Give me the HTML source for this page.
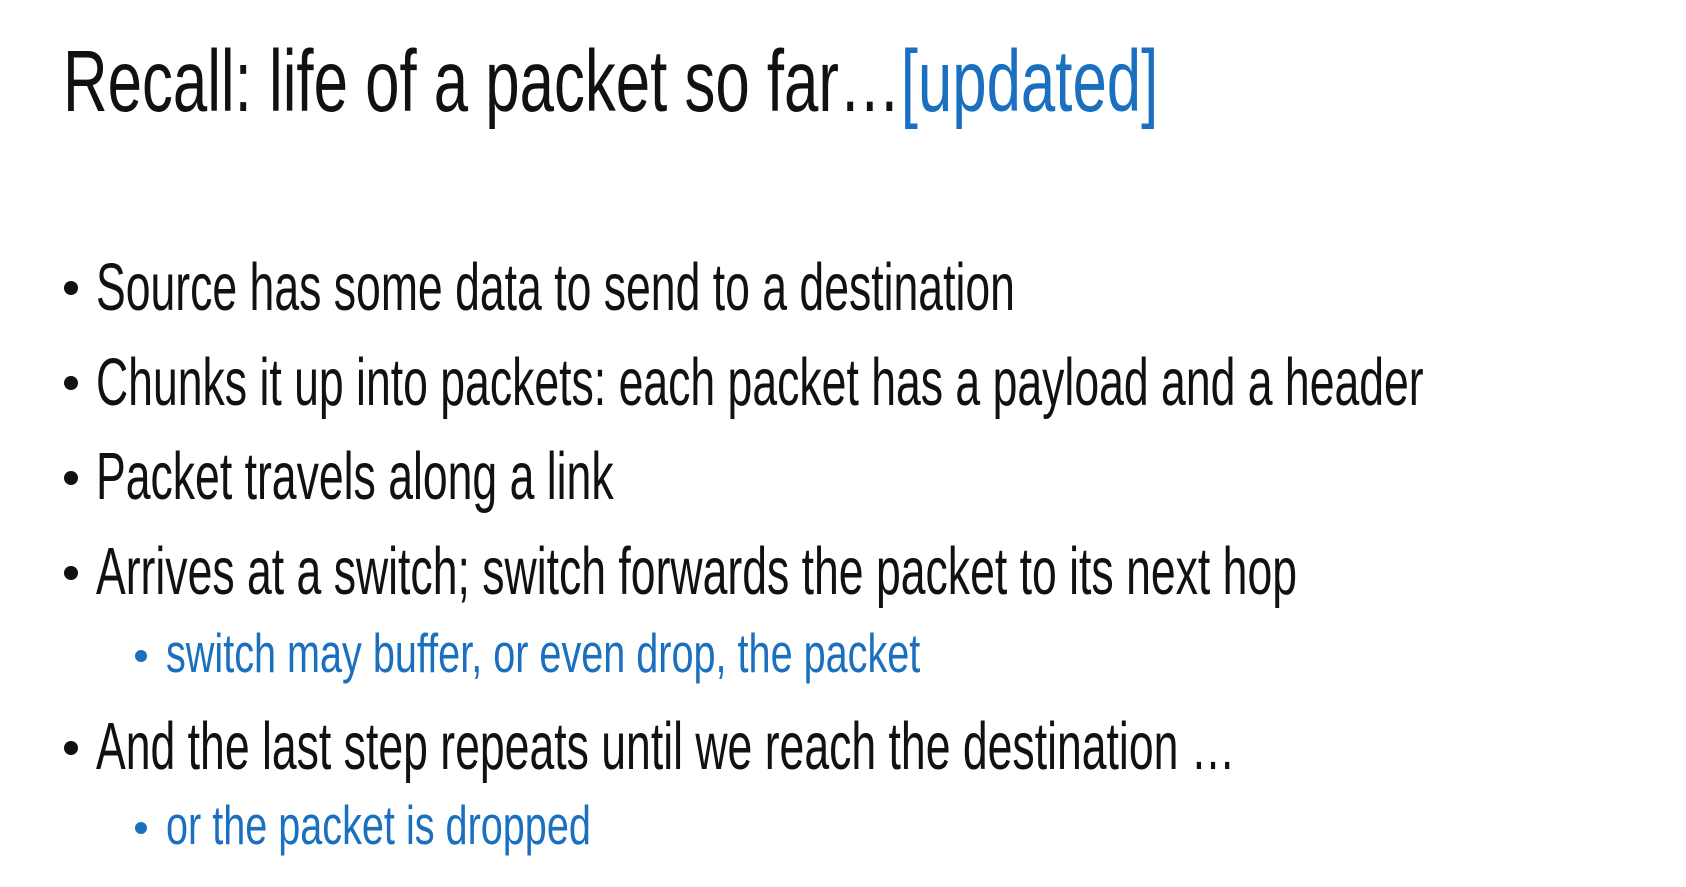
<!DOCTYPE html>
<html><head><meta charset="utf-8"><style>
body{margin:0;width:1686px;height:887px;background:#fff;overflow:hidden;position:relative;font-family:"Liberation Sans",sans-serif;}
.l{position:absolute;white-space:nowrap;transform-origin:0 0;line-height:1;}
.t{font-size:87px;left:63px;top:38px;transform:scaleX(0.71);color:#111}
.b{font-size:67px;left:96px;transform:scaleX(0.665);color:#111}
.s{font-size:55px;left:166px;transform:scaleX(0.72);color:#1a6fbf}
.d{position:absolute;width:14px;height:14px;border-radius:50%;background:#111;left:64px}
.sd{position:absolute;width:12px;height:12px;border-radius:50%;background:#1a6fbf;left:135px}
</style></head><body>
<div class="l t">Recall: life of a packet so far…<span style="color:#1a6fbf">[updated]</span></div>
<div class="d" style="top:281px"></div>
<div class="l b" style="top:254px">Source has some data to send to a destination</div>
<div class="d" style="top:376px"></div>
<div class="l b" style="top:349px">Chunks it up into packets: each packet has a payload and a header</div>
<div class="d" style="top:471px"></div>
<div class="l b" style="top:443px">Packet travels along a link</div>
<div class="d" style="top:566px"></div>
<div class="l b" style="top:538px">Arrives at a switch; switch forwards the packet to its next hop</div>
<div class="sd" style="top:650px"></div>
<div class="l s" style="top:626px">switch may buffer, or even drop, the packet</div>
<div class="d" style="top:741px"></div>
<div class="l b" style="top:713px">And the last step repeats until we reach the destination …</div>
<div class="sd" style="top:822px"></div>
<div class="l s" style="top:798px">or the packet is dropped</div>
</body></html>
